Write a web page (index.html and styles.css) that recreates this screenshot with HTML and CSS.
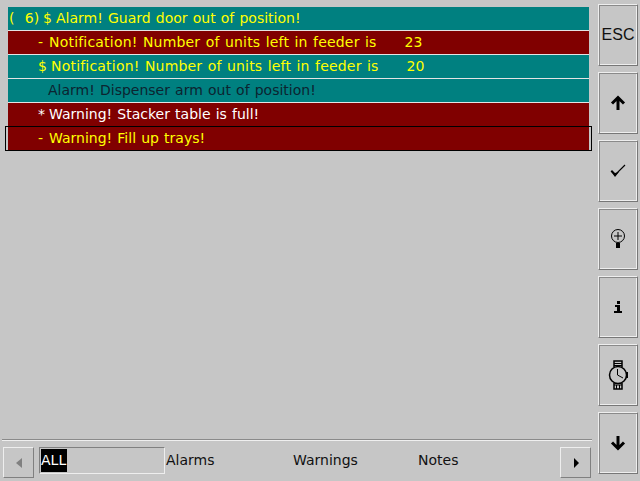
FILE: index.html
```html
<!DOCTYPE html>
<html lang="en">
<head>
    <meta charset="UTF-8">
    <title>Alarms</title>
    <link rel="stylesheet" href="styles.css">
</head>
<body>
    <div class="screen">
        <div class="main">
            <ul class="list">
                <li class="row teal yellow"><span class="count">(&nbsp;&nbsp;6)</span><span class="mark">$</span>Alarm! Guard door out of position!</li>
                <li class="row red yellow"><span class="indent">-</span><span class="notif">Notification! Number of units left in feeder is</span><span class="num">23</span></li>
                <li class="row teal yellow"><span class="indent wide">$</span><span class="notif">Notification! Number of units left in feeder is</span><span class="num">20</span></li>
                <li class="row teal dark"><span class="indent narrow"></span>Alarm! Dispenser arm out of position!</li>
                <li class="row red white"><span class="indent">*</span>Warning! Stacker table is full!</li>
                <li class="selected"><div class="row red yellow"><span class="indent">-</span>Warning! Fill up trays!</div></li>
            </ul>
            <div class="tabs">
                <div class="tabbtn">
                    <svg width="8" height="12" viewBox="0 0 8 12"><path d="M7 1V11L1 6Z" fill="#808080"/></svg>
                </div>
                <div class="tab tab_on"><span>ALL</span></div>
                <div class="tab tab_alarms">Alarms</div>
                <div class="tab tab_warn">Warnings</div>
                <div class="tab tab_notes">Notes</div>
                <div class="tabbtn">
                    <svg width="8" height="12" viewBox="0 0 8 12"><path d="M2 1V11L7 6Z" fill="#000"/></svg>
                </div>
            </div>
        </div>
        <div class="side">
            <div class="btn esc">ESC</div>
            <div class="btn">
                <svg width="16" height="16" viewBox="0 0 16 16"><path d="M8 15V3M2 8.500L8 2.500L14 8.500" fill="none" stroke="#000" stroke-width="3"/></svg>
            </div>
            <div class="btn">
                <svg width="16" height="14" viewBox="0 0 16 14"><path d="M1 7L5 11L15 1" fill="none" stroke="#000" stroke-width="1.200"/><path d="M1 7.500L5 13L9 8L5 9L2 6Z" fill="#000"/></svg>
            </div>
            <div class="btn">
                <svg width="16" height="20" viewBox="0 0 16 20"><circle cx="8" cy="7" r="6.500" fill="none" stroke="#000"/><path d="M4 7H12M8 3V11" stroke="#000"/><path d="M6 14H10V19H6Z" fill="#000"/></svg>
            </div>
            <div class="btn">
                <svg width="8" height="12" viewBox="0 0 8 12"><path d="M3 0H6V3H3ZM1 4H6V10H8V12H0V10H3V6H1Z" fill="#000"/></svg>
            </div>
            <div class="btn">
                <svg width="20" height="30" viewBox="0 0 20 30"><path d="M6 7V1H14V7M6 23V29H14V23" fill="none" stroke="#000" stroke-width="1.500"/><path d="M6 3.500H14M6 5.500H14M6 25H14M8.500 25V29M11.500 25V29" stroke="#000"/><circle cx="10" cy="15" r="8.500" fill="none" stroke="#000" stroke-width="1.500"/><path d="M9.500 9V15L15 18" fill="none" stroke="#000"/><path d="M18 12H20V18H18Z" fill="#000"/></svg>
            </div>
            <div class="btn">
                <svg width="16" height="16" viewBox="0 0 16 16"><path d="M8 1V13M2 7.500L8 13.500L14 7.500" fill="none" stroke="#000" stroke-width="3"/></svg>
            </div>
        </div>
    </div>
</body>
</html>
```

FILE: styles.css
```css
html,body{margin:0;padding:0;}
body{width:640px;height:481px;overflow:hidden;background:#c6c6c6;font:14px/23px "DejaVu Sans",sans-serif;word-spacing:.7px;}
ul{margin:0;padding:0;}
li{list-style:none;}

.screen{display:flex;height:481px;}

.main{width:598px;display:flex;flex-direction:column;}
.list{flex:1;padding:7px 9px 0 8px;}

.row{height:23px;margin-bottom:1px;white-space:pre;box-shadow:0 1px 0 #e4e4e4;display:flex;}
.teal{background:#008080;}
.red{background:#800000;}
.yellow{color:#ffff00;}
.white{color:#fff;}
.dark{color:#0c2430;}

.count{width:35px;padding-left:1px;box-sizing:border-box;}
.mark{width:13px;}
.indent{width:41px;padding-left:30px;box-sizing:border-box;}
.wide{width:43px;}
.narrow{width:40px;}
.notif{letter-spacing:.2px;}
.num{margin-left:28px;}

.selected{margin:-1px -3px 0;border:1px solid #000;padding:0 2px;height:23px;}
.selected .row{box-shadow:none;margin:0;}

.tabs{display:flex;margin:0 6px 3px 2px;padding:7px 1px 0;height:31px;border-top:1px solid #8a8a8a;box-shadow:inset 0 1px 0 #efefef;align-items:flex-start;}
.tabbtn{width:31px;height:31px;box-sizing:border-box;border:1px solid;border-color:#eee #808080 #808080 #eee;display:flex;align-items:center;justify-content:center;}
.tab{height:27px;line-height:27px;color:#111;box-sizing:border-box;}
.tab_on{width:126px;margin-left:5px;border:1px solid;border-color:#808080 #eee #eee #808080;padding:1px 0 0 1px;}
.tab_on span{display:block;width:26px;height:23px;line-height:23px;background:#000;color:#fff;}
.tab_alarms{width:128px;padding-left:1px;}
.tab_warn{width:125px;}
.tab_notes{width:142px;}

.side{width:42px;padding-top:4px;display:flex;flex-direction:column;gap:6px;}
.btn{width:40px;height:62px;box-sizing:border-box;border:1px solid;border-color:#eee #777 #777 #eee;box-shadow:inset 1px 1px 0 #8a8a8a,inset -1px -1px 0 #eee;display:flex;align-items:center;justify-content:center;}
.esc{font:16px "Liberation Sans",sans-serif;color:#111;}
```
